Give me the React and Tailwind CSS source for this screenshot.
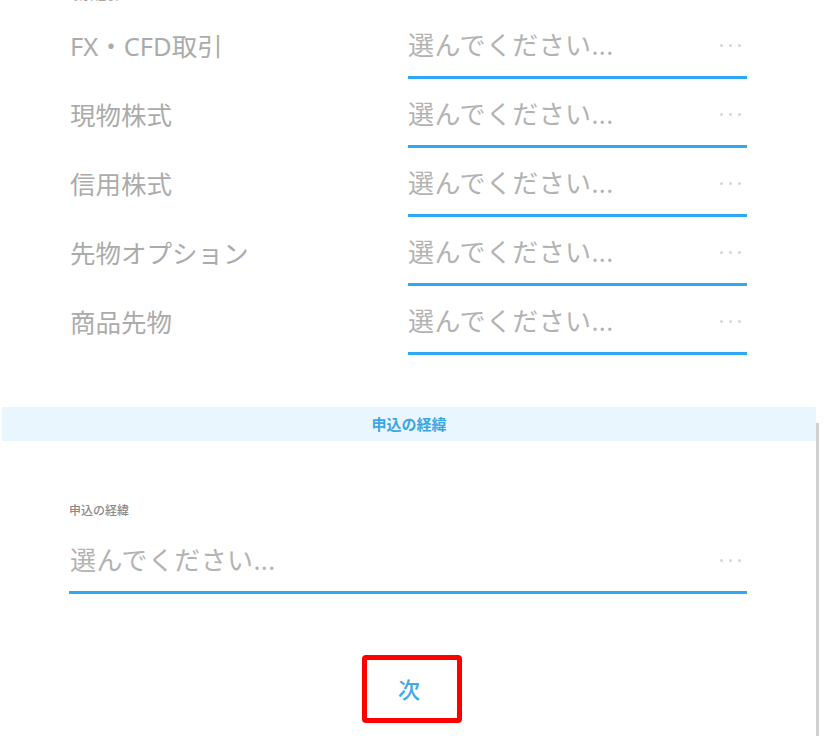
const font = { fontFamily: '"Noto Sans", "Noto Sans CJK JP", sans-serif' }

const rows = ["FX・CFD取引", "現物株式", "信用株式", "先物オプション", "商品先物"]

const Dots = () => (
  <div className="ml-auto mr-[6px] flex items-center gap-[6px]">
    <span className="h-[3px] w-[3px] rounded-full bg-[#d6d6d6]" />
    <span className="h-[3px] w-[3px] rounded-full bg-[#d6d6d6]" />
    <span className="h-[3px] w-[3px] rounded-full bg-[#d6d6d6]" />
  </div>
)

const SelectBox = ({ className = "" }) => (
  <div
    className={`flex h-full items-center border-b-[3px] border-[#2ea8f2] pt-1 ${className}`}
  >
    <span className="text-[26px] leading-none tracking-[0.4px] text-[#b3b3b3]">選んでください...</span>
    <Dots />
  </div>
)

export default function App() {
  return (
    <div className="h-[736px] w-[836px] overflow-hidden bg-white" style={font}>
      <div className="-mt-[11px] h-[21px] pl-[70px] text-[12px] leading-[14px] text-[#999]">取引経験</div>

      {rows.map((label) => (
        <div key={label} className="flex h-[69px] items-center">
          <div className="w-[408px] pl-[70px] pt-1 text-[25.5px] leading-none text-[#ababab]">{label}</div>
          <SelectBox className="w-[339px]" />
        </div>
      ))}

      <div className="mt-[52px] flex">
        <div className="ml-[2px] w-[814px]">
          <div className="flex h-[34px] items-center justify-center bg-[#eaf6fd] text-[15px] font-bold text-[#3aa6e6]">
            申込の経緯
          </div>

          <div className="pl-[67px] pt-[62px]">
            <div className="text-[12px] font-medium leading-[16px] text-[#8a8a8a]">申込の経緯</div>
            <div className="mt-[6px] h-[69px]">
              <SelectBox className="w-[678px] pl-[1px]" />
            </div>
          </div>

          <div className="ml-[360px] mt-[61px] flex h-[68px] w-[100px] items-center justify-center rounded-[4px] border-[5px] border-[#ff0000] pr-[6px]">
            <span className="text-[22px] font-medium text-[#3fa9e3]">次</span>
          </div>
        </div>
        <div className="mt-[16px] h-[320px] w-[3px] bg-[#d0d0d0]" />
      </div>
    </div>
  )
}
